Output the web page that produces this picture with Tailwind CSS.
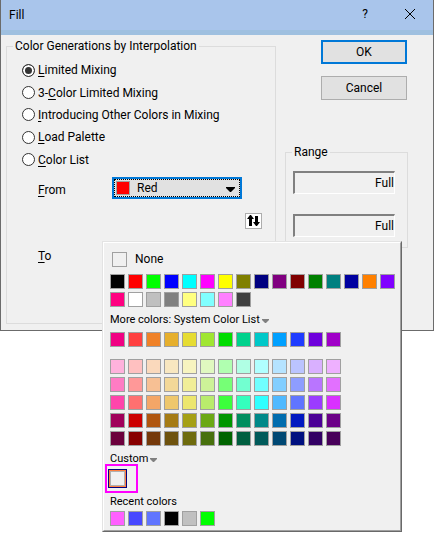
<!DOCTYPE html>
<html lang="en">
<head>
<meta charset="utf-8">
<title>Fill</title>
<script src="https://cdn.jsdelivr.net/npm/@tailwindcss/browser@4"></script>
</head>
<body class="relative min-h-screen bg-white text-black text-[12px] leading-4 font-[Roboto,sans-serif]">
<main class="border-x border-b border-[#6b6b6b] bg-[#f0f0f0]">
  <header class="flex h-[35px] items-start border-b-5 border-[#9fc0e0] bg-[#a9c5eb] pl-2 pr-[17px]">
    <h1 class="mt-[7px] flex-1">Fill</h1>
    <button class="mt-[6px] mr-[33px] w-3" aria-label="Help">?</button>
    <button class="mt-[8px] w-3 h-3" aria-label="Close">
      <svg width="12" height="12" viewBox="0 0 12 12" stroke="#000" stroke-width="1"><path d="M1 1L11 11M11 1L1 11"/></svg>
    </button>
  </header>
  <div class="flex justify-between pl-[5px] pr-[25px] pt-[3px] pb-[6px]">
    <fieldset class="w-[270px] h-[286px] border border-[#dcdcdc] px-[6px]">
      <legend class="px-[2px]">Color Generations by Interpolation</legend>
      <div class="mt-[5px] ml-[9px] grid h-28 grid-rows-5 items-center">
        <label class="flex items-center gap-[3px]"><input type="radio" name="mode" checked class="size-[13px] appearance-none rounded-full border border-[#333] bg-white checked:bg-[#333] checked:shadow-[inset_0_0_0_2px_white]"><span><u class="underline-offset-2">L</u>imited Mixing</span></label>
        <label class="flex items-center gap-[3px]"><input type="radio" name="mode" class="size-[13px] appearance-none rounded-full border border-[#333] bg-white"><span>3-<u class="underline-offset-2">C</u>olor Limited Mixing</span></label>
        <label class="flex items-center gap-[3px]"><input type="radio" name="mode" class="size-[13px] appearance-none rounded-full border border-[#333] bg-white"><span class="whitespace-nowrap"><u class="underline-offset-2">I</u>ntroducing Other Colors in Mixing</span></label>
        <label class="flex items-center gap-[3px]"><input type="radio" name="mode" class="size-[13px] appearance-none rounded-full border border-[#333] bg-white"><span><u class="underline-offset-2">L</u>oad Palette</span></label>
        <label class="flex items-center gap-[3px]"><input type="radio" name="mode" class="size-[13px] appearance-none rounded-full border border-[#333] bg-white"><span><u class="underline-offset-2">C</u>olor List</span></label>
      </div>
      <div class="mt-[6px] ml-[25px] flex items-center">
        <label for="from" class="w-[74px] pt-1"><u class="underline-offset-2">F</u>rom</label>
        <div class="w-[130px] border-2 border-[#0078d7] bg-[#e1e1e1]">
          <div class="flex h-[18px] items-center border border-dotted border-black pl-[1px] pr-1">
            <span class="size-[14px] border border-[#a0a0a0] bg-[#ff0000]"></span>
            <select id="from" class="ml-[7px] min-w-0 flex-1 appearance-none outline-none"><option>Red</option></select>
            <svg class="mt-[3px]" width="9" height="5" viewBox="0 0 9 5"><path d="M0 0H9V1L5 5H4L0 1Z"/></svg>
          </div>
        </div>
      </div>
      <div class="mt-[14px] flex justify-end pr-[7px]">
        <button class="flex h-4 w-[17px] items-center justify-center border border-[#adadad] bg-white" aria-label="Swap colors">
          <svg width="13" height="12" viewBox="0 0 13 12"><path d="M3 0H4L7 4H5V11H2V4H0ZM8 1H11V7H13L10 11H9L6 7H8Z"/></svg>
        </button>
      </div>
      <p class="mt-[19px] ml-[25px]"><u class="underline-offset-2">T</u>o</p>
    </fieldset>
    <div class="flex w-[123px] flex-col">
      <div class="flex flex-col gap-3 pt-[2px] pl-9 pr-[1px]">
        <button class="h-6 border-2 border-[#0078d7] bg-[#e1e1e1]">OK</button>
        <button class="h-6 border border-[#adadad] bg-[#e1e1e1]">Cancel</button>
      </div>
      <fieldset class="mt-11 h-[104px] border border-[#dcdcdc] px-[6px]">
        <legend class="px-[2px]">Range</legend>
        <div class="mt-[11px] flex flex-col gap-5 pl-[1px] pr-[6px]">
          <input aria-label="Range from" value="Full" class="h-[23px] w-full border-t-2 border-l-2 border-r border-b border-t-[#808080] border-l-[#808080] border-r-white border-b-white text-right outline-none">
          <input aria-label="Range to" value="Full" class="h-[23px] w-full border-t-2 border-l-2 border-r border-b border-t-[#808080] border-l-[#808080] border-r-white border-b-white text-right outline-none">
        </div>
      </fieldset>
    </div>
  </div>
</main>

<section class="absolute top-[241px] left-[102px] w-[300px] border-l border-t border-[#e3e3e3] border-r border-b border-r-[#696969] border-b-[#696969] bg-[#f0f0f0] text-[11px]" aria-label="Color picker">
  <div class="border-t border-l border-r border-b border-t-white border-l-white border-r-[#a0a0a0] border-b-[#a0a0a0] pt-2 pb-1 pl-[6px]">
    <button class="ml-[2px] flex items-center gap-2 text-[12px]"><span class="size-[15px] border border-[#a0a0a0]"></span>None</button>
    <div class="mt-[7px] grid grid-cols-[repeat(16,15px)] gap-[3px]" data-colors="000000 ff0000 00ff00 0000ff 00ffff ff00ff ffff00 808000 000080 800080 800000 008000 008080 0000a0 ff8000 8000ff ff0080 ffffff c0c0c0 808080 ffff80 80ffff ff80ff 404040"></div>
    <button class="mt-[5px] flex items-center gap-[2px]">More colors: System Color List <svg class="mt-[2px]" width="7" height="4" viewBox="0 0 7 4" fill="#808080"><path d="M0 0H7V1L4 4H3L0 1Z"/></svg></button>
    <div class="mt-1 grid grid-cols-[repeat(13,15px)] gap-[3px]" data-colors="f00082 ff4040 f08228 e6af2d e6dc32 a0e632 00dc00 00d28c 00c8c8 00a0ff 1e3cff 6e00dc a000c8"></div>
    <div class="mt-3 grid grid-cols-[repeat(13,15px)] gap-[3px]" data-colors="ffb2dc ffc0c0 fad9bc f8e7c0 f7f4c0 e0f8c0 b0ffb0 b0ffe4 b0ffff b5e3ff bbc4ff d9b0ff eeb0ff ff7cc4 ff9898 f7c094 f3d898 f1ee98 cdf298 76ff76 72ffd0 70ffff 82ceff 8e9dff b975ff e270ff ff44ab ff7070 f4a667 eec76c ece66e b9ec6c 3cff3c 34ffbd 30ffff 4fb9ff 6075ff 9b3cff d930ff a0005a cc0000 b0560f a57b14 a5a014 6ba814 009600 008e5f 008888 006cae 0018c0 4b0096 6c0088 6b003c 880000 75390a 6e520d 6e6b0d 47700d 006400 005f40 005a5a 004874 001080 320064 48005a"></div>
    <button class="mt-[5px] flex items-center gap-[2px]">Custom <svg class="mt-[2px]" width="7" height="4" viewBox="0 0 7 4" fill="#808080"><path d="M0 0H7V1L4 4H3L0 1Z"/></svg></button>
    <div class="-ml-[5px] -mt-[3px] w-[33px] border-2 border-[#ff00ff] pl-[1px] pt-[3px] h-[29px]">
      <button class="block size-[19px] border border-[#000080] bg-[#ff8040] p-px" aria-label="Custom color 1"><span class="block size-[15px] border border-[#b0b0b0] bg-[#f0f0f0]"></span></button>
    </div>
    <p class="mt-px">Recent colors</p>
    <div class="mt-px grid grid-cols-[repeat(6,15px)] gap-[3px]" data-colors="ff60ff 4848ff 6075ff 000000 c0c0c0 00ff00"></div>
  </div>
</section>
<script>
  // Fill each palette grid with one swatch button per listed color.
  document.querySelectorAll('[data-colors]').forEach(grid => {
    grid.dataset.colors.split(' ').forEach(hex => {
      const b = document.createElement('button');
      b.className = 'size-[15px] border border-[#a0a0a0]';
      b.style.backgroundColor = '#' + hex;
      b.setAttribute('aria-label', '#' + hex);
      grid.append(b);
    });
  });
</script>
</body>
</html>
